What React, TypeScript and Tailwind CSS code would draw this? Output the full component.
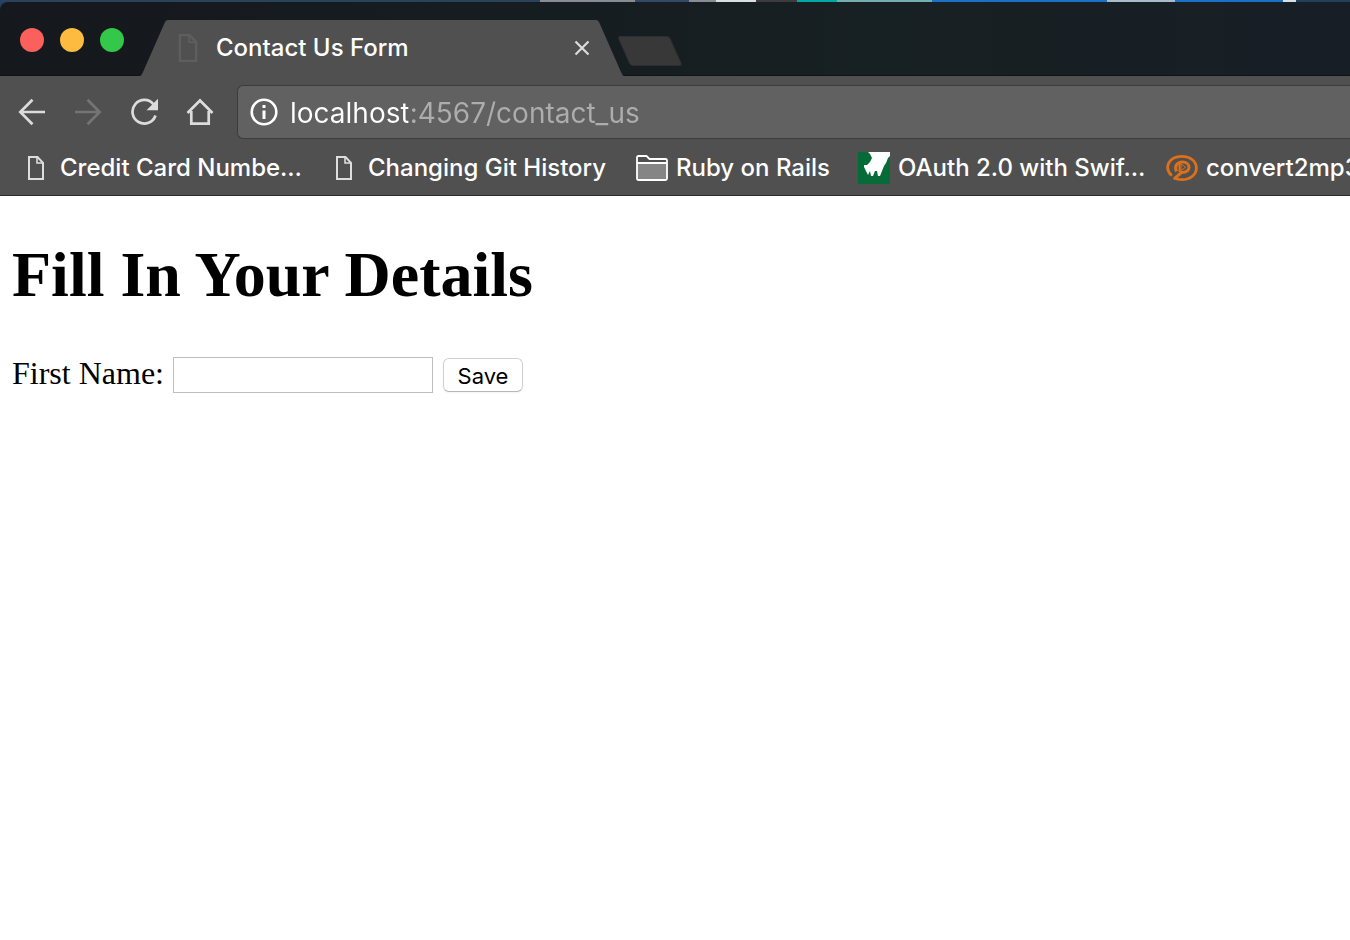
import type { ReactNode } from "react";

function PageIcon({ className }: { className: string }) {
  return (
    <svg viewBox="0 0 16 24" className={className} fill="none" stroke="currentColor" strokeWidth="2" aria-hidden="true">
      <path d="M1 1H9.5L15 6.8V23H1Z" />
      <path d="M9 1V7H15" strokeWidth="1.6" />
    </svg>
  );
}

function FolderIcon() {
  return (
    <svg viewBox="0 0 32 26" className="h-[26px] w-8" aria-hidden="true">
      <path d="M1 8H31V25H1Z" fill="#858585" />
      <path
        d="M1 23.5V2.5Q1 1 2.5 1H10.5L13.5 4H29.5Q31 4 31 5.5V23.5Q31 25 29.5 25H2.5Q1 25 1 23.5ZM1 8H31"
        fill="none"
        stroke="#fff"
        strokeWidth="1.8"
      />
    </svg>
  );
}

function GreenIcon() {
  return (
    <svg viewBox="0 0 32 32" className="size-8" aria-hidden="true">
      <path d="M0 0H32V32H0Z" fill="#066b37" />
      <path
        d="M10 0H32V4L30 6L28 11L26 14L24 19L22 24H20L19 19H17L15 24H13L12 19L10 23L8 19L6 15V13H9L12 10L14 6L12 2Z"
        fill="#fff"
      />
    </svg>
  );
}

function ConvertIcon() {
  return (
    <svg viewBox="0 0 32 28" className="h-7 w-8" fill="none" stroke="#dd7019" aria-hidden="true">
      <path d="M5.2 20.8C-1.500 14.500 1.500 2.300 16 2.300C24.500 2.300 30.400 7.500 30.400 14C30.400 20.500 24.500 25.700 16 25.700C13 25.700 10.500 25.300 7.500 24" strokeWidth="2.800" />
      <path d="M10.500 17.500C8 12.500 11 8 16.500 8C20.500 8 23 10.300 23 13.300C23 17 19.500 18.500 15.500 18.500L8.500 24.500" strokeWidth="3" />
      <path d="M13.500 9.500V18" strokeWidth="2" />
      <path d="M15 10L19.700 13.200L15 16.500Z" fill="#505050" strokeWidth="1" />
      <path d="M3 19.500L6 21.500" strokeWidth="2.500" />
    </svg>
  );
}

function NavButton({ label, dim, children }: { label: string; dim?: boolean; children: ReactNode }) {
  return (
    <button
      type="button"
      aria-label={label}
      disabled={dim}
      className={`flex h-14 w-14 shrink-0 items-center justify-center ${dim ? "text-[#747474]" : "text-[#dcdcdc]"}`}
    >
      <svg viewBox="0 0 28 28" className="size-7" fill="none" stroke="currentColor" strokeWidth="2.700" aria-hidden="true">
        {children}
      </svg>
    </button>
  );
}

function Bookmark({ icon, label, width }: { icon: ReactNode; label: string; width: string }) {
  return (
    <a href="#" className={`flex shrink-0 items-center gap-2 whitespace-nowrap ${width}`}>
      <span className="flex w-8 shrink-0 justify-center">{icon}</span>
      {label}
    </a>
  );
}

function TabStrip() {
  return (
    <div className="flex h-[74px] rounded-tl-lg border-b border-[#101216] bg-linear-to-r from-[#15181d] via-[#172022] via-65% to-[#181e26]">
      <div className="flex w-35 shrink-0 gap-4 pt-[26px] pl-5">
        <button type="button" aria-label="Close window" className="size-6 rounded-full bg-[#fc605c]" />
        <button type="button" aria-label="Minimize window" className="size-6 rounded-full bg-[#fdbc40]" />
        <button type="button" aria-label="Zoom window" className="size-6 rounded-full bg-[#34c84a]" />
      </div>
      <div className="relative mt-[18px] flex h-14 w-[484px] shrink-0 items-center pr-8 pl-[38px]">
        <svg viewBox="0 0 484 56" className="absolute inset-0 h-14 w-full" aria-hidden="true">
          <path d="M0 56Q2 55 3 52L25 2Q26 0 28 0H456Q458 0 459 2L481 52Q482 55 484 56Z" fill="#505050" />
        </svg>
        <PageIcon className="relative h-7 w-5 text-[#5e5e5e]" />
        <span className="relative ml-[18px] flex-1 text-2xl font-medium text-white">Contact Us Form</span>
        <button type="button" aria-label="Close tab" className="relative flex size-5 items-center justify-center">
          <svg viewBox="0 0 16 16" className="size-4" stroke="#dcdcdc" strokeWidth="2.200" aria-hidden="true">
            <path d="M1.500 1.500L14.500 14.500M14.500 1.500L1.500 14.500" />
          </svg>
        </button>
      </div>
      <button type="button" aria-label="New tab" className="mt-[34px] -ml-1.5 self-start">
        <svg viewBox="0 0 64 30" className="block h-[30px] w-16" aria-hidden="true">
          <path d="M2 .5H49Q51 .5 52 2.500L63 27Q64 29.500 62 29.500H15Q12.500 29.500 11.500 27.500L.8 3Q0 .5 2 .5Z" fill="#383838" stroke="#2c2e30" />
        </svg>
      </button>
    </div>
  );
}

export default function App() {
  return (
    <div className="min-h-screen overflow-x-hidden bg-white">
      <header className="font-['Inter','Liberation_Sans',sans-serif]">
        <div className="bg-[#243f5e]">
          <div className="flex h-0.5">
            <div className="w-2/5 bg-[#29425e]" />
            <div className="w-[7%] bg-[#898c94]" />
            <div className="w-[4%] bg-[#34496a]" />
            <div className="w-[2%] bg-[#898c94]" />
            <div className="w-[3%] bg-[#d9e0e4]" />
            <div className="w-[3%] bg-[#3d3a40]" />
            <div className="w-[3%] bg-[#00a9a5]" />
            <div className="w-[7%] bg-[#76aeb0]" />
            <div className="w-[13%] bg-[#1b70c8]" />
            <div className="w-[5%] bg-[#aabccc]" />
            <div className="w-[8%] bg-[#1b70c8]" />
            <div className="w-[1%] bg-[#d9e0e4]" />
          </div>
          <TabStrip />
        </div>
        <div className="border-b border-[#2c2c2c] bg-[#505050]">
          <div className="flex items-center pt-2 pl-1">
            <NavButton label="Back">
              <path d="M27 14H2.500M14.500 1.800L2.300 14L14.500 26.200" />
            </NavButton>
            <NavButton label="Forward" dim>
              <path d="M1 14H25.500M13.500 1.800L25.700 14L13.500 26.200" />
            </NavButton>
            <NavButton label="Reload">
              <path d="M23.600 6.500A11.800 11.800 0 1 0 25.500 17.500" />
              <path d="M28 .8V12.300H16.500Z" fill="currentColor" stroke="none" />
            </NavButton>
            <NavButton label="Home">
              <path d="M1.500 15L14 2.500L26.500 15M5.300 13V25.700H22.700V13" />
            </NavButton>
            <div className="ml-[9px] flex h-[54px] flex-1 items-center rounded-l-md border border-r-0 border-[#3c3c3c] bg-[#616161] pl-3">
              <svg viewBox="0 0 28 28" className="size-7 shrink-0" fill="none" stroke="#fff" strokeWidth="2.600" aria-hidden="true">
                <circle cx="14" cy="14" r="12.300" />
                <path d="M14 12.500V21M14 7V10" strokeWidth="3" />
              </svg>
              <input
                aria-label="Address"
                defaultValue="localhost:4567/contact_us"
                className="ml-3 h-full min-w-0 flex-1 bg-[linear-gradient(90deg,#fff_118px,#adadad_118px)] bg-clip-text pt-0.5 text-[28px] text-transparent caret-white outline-none"
              />
            </div>
          </div>
          <nav aria-label="Bookmarks" className="flex h-[55px] items-center overflow-hidden pl-5 text-2xl font-medium text-white">
            <Bookmark width="w-[308px]" label="Credit Card Numbe…" icon={<PageIcon className="h-6 w-4 text-[#dedede]" />} />
            <Bookmark width="w-[308px]" label="Changing Git History" icon={<PageIcon className="h-6 w-4 text-[#dedede]" />} />
            <Bookmark width="w-[222px]" label="Ruby on Rails" icon={<FolderIcon />} />
            <Bookmark width="w-[308px]" label="OAuth 2.0 with Swif…" icon={<GreenIcon />} />
            <Bookmark width="w-[308px]" label="convert2mp3" icon={<ConvertIcon />} />
          </nav>
        </div>
      </header>
      <main className="px-3 pt-[41px] font-['Liberation_Serif',serif] text-black">
        <h1 className="text-[64px] leading-[76px] font-bold">Fill In Your Details</h1>
        <form className="mt-11 flex items-center" onSubmit={(event) => event.preventDefault()}>
          <label htmlFor="first-name" className="pb-1 text-[32px] leading-8">
            First Name:
          </label>
          <input
            id="first-name"
            type="text"
            className="ml-[9px] h-9 w-65 border border-[#bebebe] bg-white px-1 font-['Inter','Liberation_Sans',sans-serif] text-[22px] outline-none"
          />
          <button
            type="submit"
            className="ml-2.5 h-[34px] w-20 rounded-md border border-[#d0d0d0] border-b-[#b8b8b8] bg-white pt-0.5 font-['Inter','Liberation_Sans',sans-serif] text-[22px] leading-[30px] shadow-xs"
          >
            Save
          </button>
        </form>
      </main>
    </div>
  );
}
